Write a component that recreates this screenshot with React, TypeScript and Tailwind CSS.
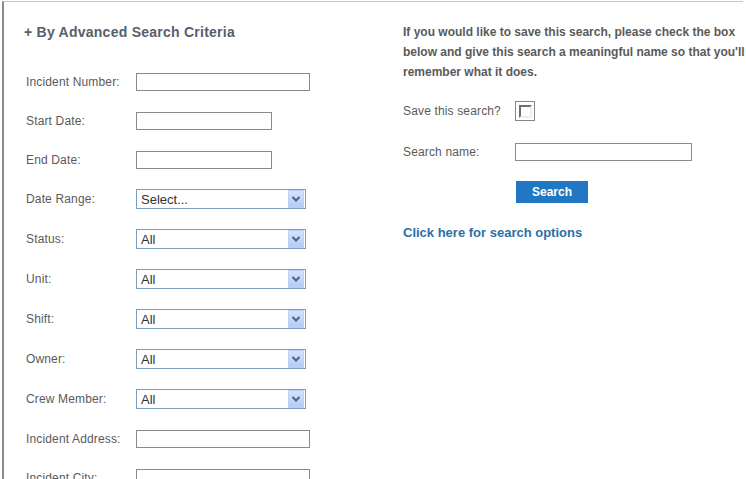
import { ReactNode } from "react";

const label = "w-[110px] shrink-0 text-[12px] leading-[20px] tracking-[0.15px] text-[#5a5a5a]";

function Row({ text, h, children }: { text: string; h: string; children: ReactNode }) {
  return (
    <div className={`flex items-center ${h}`}>
      <span className={label}>{text}</span>
      {children}
    </div>
  );
}

function TextBox({ w }: { w: string }) {
  return (
    <input
      type="text"
      className={`${w} h-[18px] border border-[#8a8a8a] bg-white outline-none`}
    />
  );
}

function Dropdown({ value }: { value: string }) {
  return (
    <div className="flex h-[20px] w-[170px] items-center justify-between border border-[#7f9db9] bg-white pl-[4px] pr-px">
      <span className="text-[13px] leading-none text-[#333]">{value}</span>
      <span className="flex h-[18px] w-[16px] items-center justify-center border border-[#bcd0f6] bg-gradient-to-b from-[#d4e2fc] to-[#b5cbf7]">
        <svg width="10" height="8" viewBox="0 0 10 8">
          <path d="M1.5 2 L5 5.5 L8.5 2" fill="none" stroke="#4d6185" strokeWidth="2" />
        </svg>
      </span>
    </div>
  );
}

export default function App() {
  const selects = [
    ["Date Range:", "Select..."],
    ["Status:", "All"],
    ["Unit:", "All"],
    ["Shift:", "All"],
    ["Owner:", "All"],
    ["Crew Member:", "All"],
  ];

  return (
    <div className="h-[479px] w-[746px] overflow-hidden bg-white font-['Liberation_Sans',Arial,sans-serif]">
      <div className="ml-[2px] mt-px flex h-[500px] w-[741px] border-l-2 border-t border-l-[#8c8c8c] border-t-[#c8c8c8]">
        {/* left column */}
        <div className="w-[399px] shrink-0 pl-5 pt-5">
          <h2 className="text-[14px] font-bold leading-[20px] tracking-[0.25px] text-[#56606a]">
            + By Advanced Search Criteria
          </h2>
          <div className="ml-0.5 mt-[20px] flex flex-col">
            <Row text="Incident Number:" h="h-[39px]">
              <TextBox w="w-[174px]" />
            </Row>
            <Row text="Start Date:" h="h-[39px]">
              <TextBox w="w-[136px]" />
            </Row>
            <Row text="End Date:" h="h-[39px]">
              <TextBox w="w-[136px]" />
            </Row>
            {selects.map(([t, v]) => (
              <Row key={t} text={t} h="h-[40px]">
                <Dropdown value={v} />
              </Row>
            ))}
            <Row text="Incident Address:" h="h-[39px]">
              <TextBox w="w-[174px]" />
            </Row>
            <Row text="Incident City:" h="h-[39px]">
              <TextBox w="w-[174px]" />
            </Row>
          </div>
        </div>

        {/* right column */}
        <div className="w-[350px] shrink-0 pt-5">
          <p className="text-[12px] font-bold leading-[20px] text-[#5a5a5a]">
            If you would like to save this search, please check the box below and give this
            search a meaningful name so that you'll remember what it does.
          </p>

          <div className="mt-[19px] flex h-[20px] items-center">
            <span className="w-[112px] shrink-0 text-[12px] tracking-[0.15px] text-[#5a5a5a]">Save this search?</span>
            <span className="flex h-[20px] w-[20px] items-center justify-center border border-[#858585] bg-white">
              <span className="h-[13px] w-[13px] border-2 border-b-[#f1efe2] border-l-[#716f64] border-r-[#f1efe2] border-t-[#716f64] bg-white" />
            </span>
          </div>

          <div className="mt-[22px] flex h-[18px] items-center">
            <span className="w-[112px] shrink-0 text-[12px] tracking-[0.15px] text-[#5a5a5a]">Search name:</span>
            <TextBox w="w-[177px]" />
          </div>

          <button className="ml-[113px] mt-[20px] block h-[22px] w-[72px] bg-[#1f78c1] text-[12px] font-bold text-white">
            Search
          </button>

          <a className="mt-[20px] block text-[13px] font-bold leading-[20px] text-[#2c6fa8]">
            Click here for search options
          </a>
        </div>
      </div>
    </div>
  );
}
